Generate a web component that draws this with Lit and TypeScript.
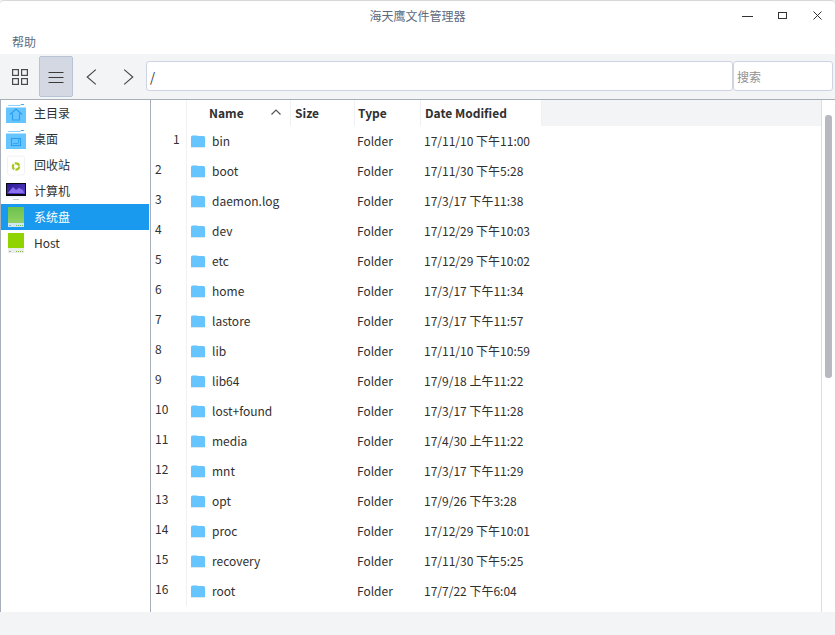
import { LitElement, html, css } from "lit";
import { customElement } from "lit/decorators.js";

const rows: [string, string][] = [
  ["bin", "17/11/10 下午11:00"],
  ["boot", "17/11/30 下午5:28"],
  ["daemon.log", "17/3/17 下午11:38"],
  ["dev", "17/12/29 下午10:03"],
  ["etc", "17/12/29 下午10:02"],
  ["home", "17/3/17 下午11:34"],
  ["lastore", "17/3/17 下午11:57"],
  ["lib", "17/11/10 下午10:59"],
  ["lib64", "17/9/18 上午11:22"],
  ["lost+found", "17/3/17 下午11:28"],
  ["media", "17/4/30 上午11:22"],
  ["mnt", "17/3/17 下午11:29"],
  ["opt", "17/9/26 下午3:28"],
  ["proc", "17/12/29 下午10:01"],
  ["recovery", "17/11/30 下午5:25"],
  ["root", "17/7/22 下午6:04"],
];

const icons: Record<string, unknown> = {
  home: html`<svg width="22" height="24" viewBox="0 0 22 24">
    <path d="M2 4.500h12" stroke="#8ed2ff"/><path d="M14 4.500l1-1h3" stroke="#3daef5" fill="none"/>
    <rect x="0" y="6.500" width="20" height="15.500" fill="#66c4ff"/>
    <path d="M4 13.500l6-5.500 6 5.500M6.500 12.500v6.500h7v-6.500" fill="none" stroke="#2a9ff0" stroke-width="1.100"/></svg>`,
  desk: html`<svg width="22" height="24" viewBox="0 0 22 24">
    <path d="M2 4.500h12" stroke="#8ed2ff"/><path d="M14 4.500l1-1h3" stroke="#3daef5" fill="none"/>
    <rect x="0" y="6.500" width="20" height="15.500" fill="#66c4ff"/>
    <rect x="5.500" y="11.500" width="9" height="7" fill="none" stroke="#2a9ff0" stroke-width="1.100"/><path d="M7 16.500h5.500M12.500 12v4" stroke="#2a9ff0" stroke-width=".8"/></svg>`,
  trash: html`<svg width="22" height="24" viewBox="0 0 22 24">
    <rect x="1.500" y="3" width="17" height="19" rx="2" fill="#fff" stroke="#f1f2f3"/>
    <circle cx="10" cy="13.500" r="3.200" fill="none" stroke="#a8c81c" stroke-width="2.200" stroke-dasharray="5.500 1.200"/></svg>`,
  comp: html`<svg width="22" height="24" viewBox="0 0 22 24">
    <defs><linearGradient id="sc" x1="0" y1="0" x2="1" y2="1"><stop offset="0" stop-color="#2a1a90"/><stop offset="1" stop-color="#5a3fc8"/></linearGradient></defs>
    <rect x="0" y="17" width="20" height="2" fill="#f2f5fa"/>
    <rect x="0" y="4" width="20" height="13" fill="#0a0a14"/>
    <rect x="1" y="5" width="18" height="10" fill="url(#sc)"/>
    <path d="M2 14l5-6 3 3 3-2 4 2 1 3z" fill="#8a70ee"/>
    <rect x="7" y="20" width="6" height="1" fill="#c8ccd4"/></svg>`,
  disk: html`<svg width="22" height="24" viewBox="0 0 22 24">
    <defs><linearGradient id="dg" x1="0" y1="0" x2="0" y2="1"><stop offset="0" stop-color="#6cc24f"/><stop offset="1" stop-color="#8fd163"/></linearGradient></defs>
    <rect x="2" y="2" width="16" height="16" fill="url(#dg)"/>
    <rect x="2" y="18" width="16" height="4" fill="#cfe6f5"/>
    <path d="M3 20.500h2" stroke="#9bb4c0"/>
    <path d="M10 20.500h7" stroke="#6cc24f" stroke-dasharray="1 1"/></svg>`,
  host: html`<svg width="22" height="24" viewBox="0 0 22 24">
    <rect x="2" y="2" width="16" height="15" fill="#8fd400"/>
    <rect x="2" y="17" width="16" height="5" fill="#e9eeea"/>
    <path d="M3 20.500h2" stroke="#aab4aa"/>
    <path d="M10 20.500h7" stroke="#8ab84a" stroke-dasharray="1 1"/></svg>`,
};

const places = [
  ["home", "主目录"],
  ["desk", "桌面"],
  ["trash", "回收站"],
  ["comp", "计算机"],
  ["disk", "系统盘"],
  ["host", "Host"],
];

@customElement("app-root")
export class AppRoot extends LitElement {
  static styles = css`
    :host {
      display: block;
      width: 835px;
      height: 635px;
      overflow: hidden;
      font-family: "Noto Sans CJK SC", "Noto Sans", sans-serif;
      font-size: 12px;
      color: #303030;
      background: #f3f4f6;
    }
    * { box-sizing: border-box; }
    .window { display: flex; flex-direction: column; height: 100%; }
    .title {
      height: 31px;
      flex: none;
      background: #fff;
      border-top: 1px solid #d8d8d8;
      border-radius: 4px 4px 0 0;
      position: relative;
      display: flex;
      align-items: center;
      justify-content: center;
      color: #5c6a80;
      font-size: 12px;
      padding-bottom: 1px;
    }
    .winbtns { position: absolute; top: 0; right: 0; display: flex; height: 30px; }
    .winbtn { width: 35px; display: flex; align-items: center; justify-content: center; }
    .menu {
      height: 23px;
      flex: none;
      background: #fff;
      padding: 0 12px;
      color: #5f6b7c;
      font-size: 12px;
      line-height: 22px;
    }
    .toolbar {
      height: 46px;
      flex: none;
      background: #f3f4f6;
      border-bottom: 1px solid #a9afb8;
      display: flex;
      align-items: flex-start;
      padding: 2px 2px 0 3px;
    }
    .tool {
      width: 34px;
      height: 41px;
      flex: none;
      display: flex;
      align-items: center;
      justify-content: center;
      margin-right: 2px;
    }
    .tool.on { background: #d3d8e3; border: 1px solid #b9c3d6; border-radius: 2px; margin-right: 0; }
    .tool.nav { width: 37px; margin-right: 0; }
    .path, .search {
      height: 30px;
      margin-top: 5px;
      background: #fff;
      border: 1px solid #ccd3e2;
      border-radius: 3px;
      display: flex;
      align-items: center;
      padding-left: 3px;
    }
    .path { flex: 1; margin-left: -1px; font-size: 13px; }
    .search { width: 100px; color: #909090; font-size: 12px; }
    .main { height: 512px; flex: none; display: flex; background: #fff; overflow: hidden; }
    .side {
      width: 151px;
      flex: none;
      border-left: 1px solid #a9afb8;
      border-right: 1px solid #a9afb8;
    }
    .place {
      height: 26px;
      margin-right: 1px;
      display: flex;
      align-items: center;
      gap: 6px;
      padding-left: 5px;
      font-size: 12px;
      color: #303030;
    }
    .place span { margin-bottom: 2px; }
    .place.sel { background: #1a9aee; color: #fff; }
    .place svg { flex: none; }
    .table { flex: 1; min-width: 0; display: flex; }
    .content { flex: 1; min-width: 0; }
    .head {
      display: grid;
      grid-template-columns: 36px 104px 64px 66px 121px 1fr;
      height: 26px;
      background: #fff;
      font-weight: 700;
      font-size: 12px;
    }
    .head > div {
      display: flex;
      align-items: center;
      padding-left: 4px;
      padding-bottom: 2px;
      border-right: 1px solid #f0f1f3;
    }
    .head > .fill { background: #f3f4f6; border: 0; }
    .head > .name { padding-left: 22px; justify-content: space-between; padding-right: 8px; }
    .head > .ty { padding-left: 3px; }
    .row {
      display: grid;
      grid-template-columns: 36px 170px 66px 1fr;
      height: 30px;
      align-items: center;
      font-size: 12px;
    }
    .row > .fname, .row > .type, .row > .date { margin-bottom: 2px; }
    .num {
      height: 100%;
      border-right: 1px solid #f0f1f3;
      padding: 5px 0 0 4px;
      line-height: 16px;
    }
    .num.first { padding-left: 22px; }
    .fname { display: flex; align-items: center; gap: 7px; padding-left: 4px; }
    .fname svg { flex: none; margin-top: 2px; }
    .date { padding-left: 1px; }
    .scroll {
      width: 14px;
      flex: none;
      border-left: 1px solid #dcdde0;
      background: #fff;
      padding: 15px 0 0 3px;
    }
    .thumb { width: 7px; height: 263px; border-radius: 3px; background: #b8b9c0; }
  `;

  render() {
    return html`<div class="window">
      <div class="title">海天鹰文件管理器
        <div class="winbtns">
          <div class="winbtn"><svg width="12" height="12" viewBox="0 0 12 12"><path d="M0 6.500h11" stroke="#333" fill="none"/></svg></div>
          <div class="winbtn"><svg width="10" height="10" viewBox="0 0 10 10"><rect x=".5" y="1.500" width="8" height="6" stroke="#333" stroke-width="1" fill="none"/></svg></div>
          <div class="winbtn"><svg width="12" height="12" viewBox="0 0 12 12"><path d="M1.500 1.500l8 8M9.500 1.500l-8 8" stroke="#333" fill="none"/></svg></div>
        </div>
      </div>
      <div class="menu">帮助</div>
      <div class="toolbar">
        <div class="tool"><svg width="16" height="16" viewBox="0 0 16 16"><g fill="none" stroke="#4a4a4a" stroke-width="1.200"><rect x=".6" y=".6" width="5.800" height="5.800"/><rect x="9.600" y=".6" width="5.800" height="5.800"/><rect x=".6" y="9.600" width="5.800" height="5.800"/><rect x="9.600" y="9.600" width="5.800" height="5.800"/></g></svg></div>
        <div class="tool on"><svg width="16" height="12" viewBox="0 0 16 12"><path d="M.5 1.500h15M.5 6.500h15M.5 11.500h15" stroke="#3a3a3a" stroke-width="1" fill="none"/></svg></div>
        <div class="tool nav"><svg width="11" height="16" viewBox="0 0 11 16"><path d="M9.800 .6L1.200 8l8.600 7.400" stroke="#444" stroke-width="1.100" fill="none"/></svg></div>
        <div class="tool nav"><svg width="11" height="16" viewBox="0 0 11 16"><path d="M1.200 .6L9.800 8l-8.600 7.400" stroke="#444" stroke-width="1.100" fill="none"/></svg></div>
        <div class="path">/</div>
        <div class="search">搜索</div>
      </div>
      <div class="main">
        <div class="side">
          ${places.map(([k, t]) => html`<div class="place ${k === "disk" ? "sel" : ""}">${icons[k]}<span>${t}</span></div>`)}
        </div>
        <div class="table">
          <div class="content">
            <div class="head">
              <div></div>
              <div class="name">Name<svg width="12" height="8" viewBox="0 0 12 8"><path d="M1.500 6.500L6 2l4.500 4.500" stroke="#555" stroke-width="1.200" fill="none"/></svg></div>
              <div>Size</div>
              <div class="ty">Type</div>
              <div>Date Modified</div>
              <div class="fill"></div>
            </div>
            ${rows.map(([n, d], i) => html`<div class="row">
              <div class="num ${i === 0 ? "first" : ""}">${i + 1}</div>
              <div class="fname"><svg width="14" height="13" viewBox="0 0 14 13"><path d="M0 2q0-1.500 1.500-1.500h4.500L7 1h5.500Q14 1 14 2.500V12H0z" fill="#66c4ff"/><path d="M0 12.500h14" stroke="#dfe8ee"/></svg><span>${n}</span></div>
              <div class="type">Folder</div>
              <div class="date">${d}</div>
            </div>`)}
          </div>
          <div class="scroll"><div class="thumb"></div></div>
        </div>
      </div>
    </div>`;
  }
}
